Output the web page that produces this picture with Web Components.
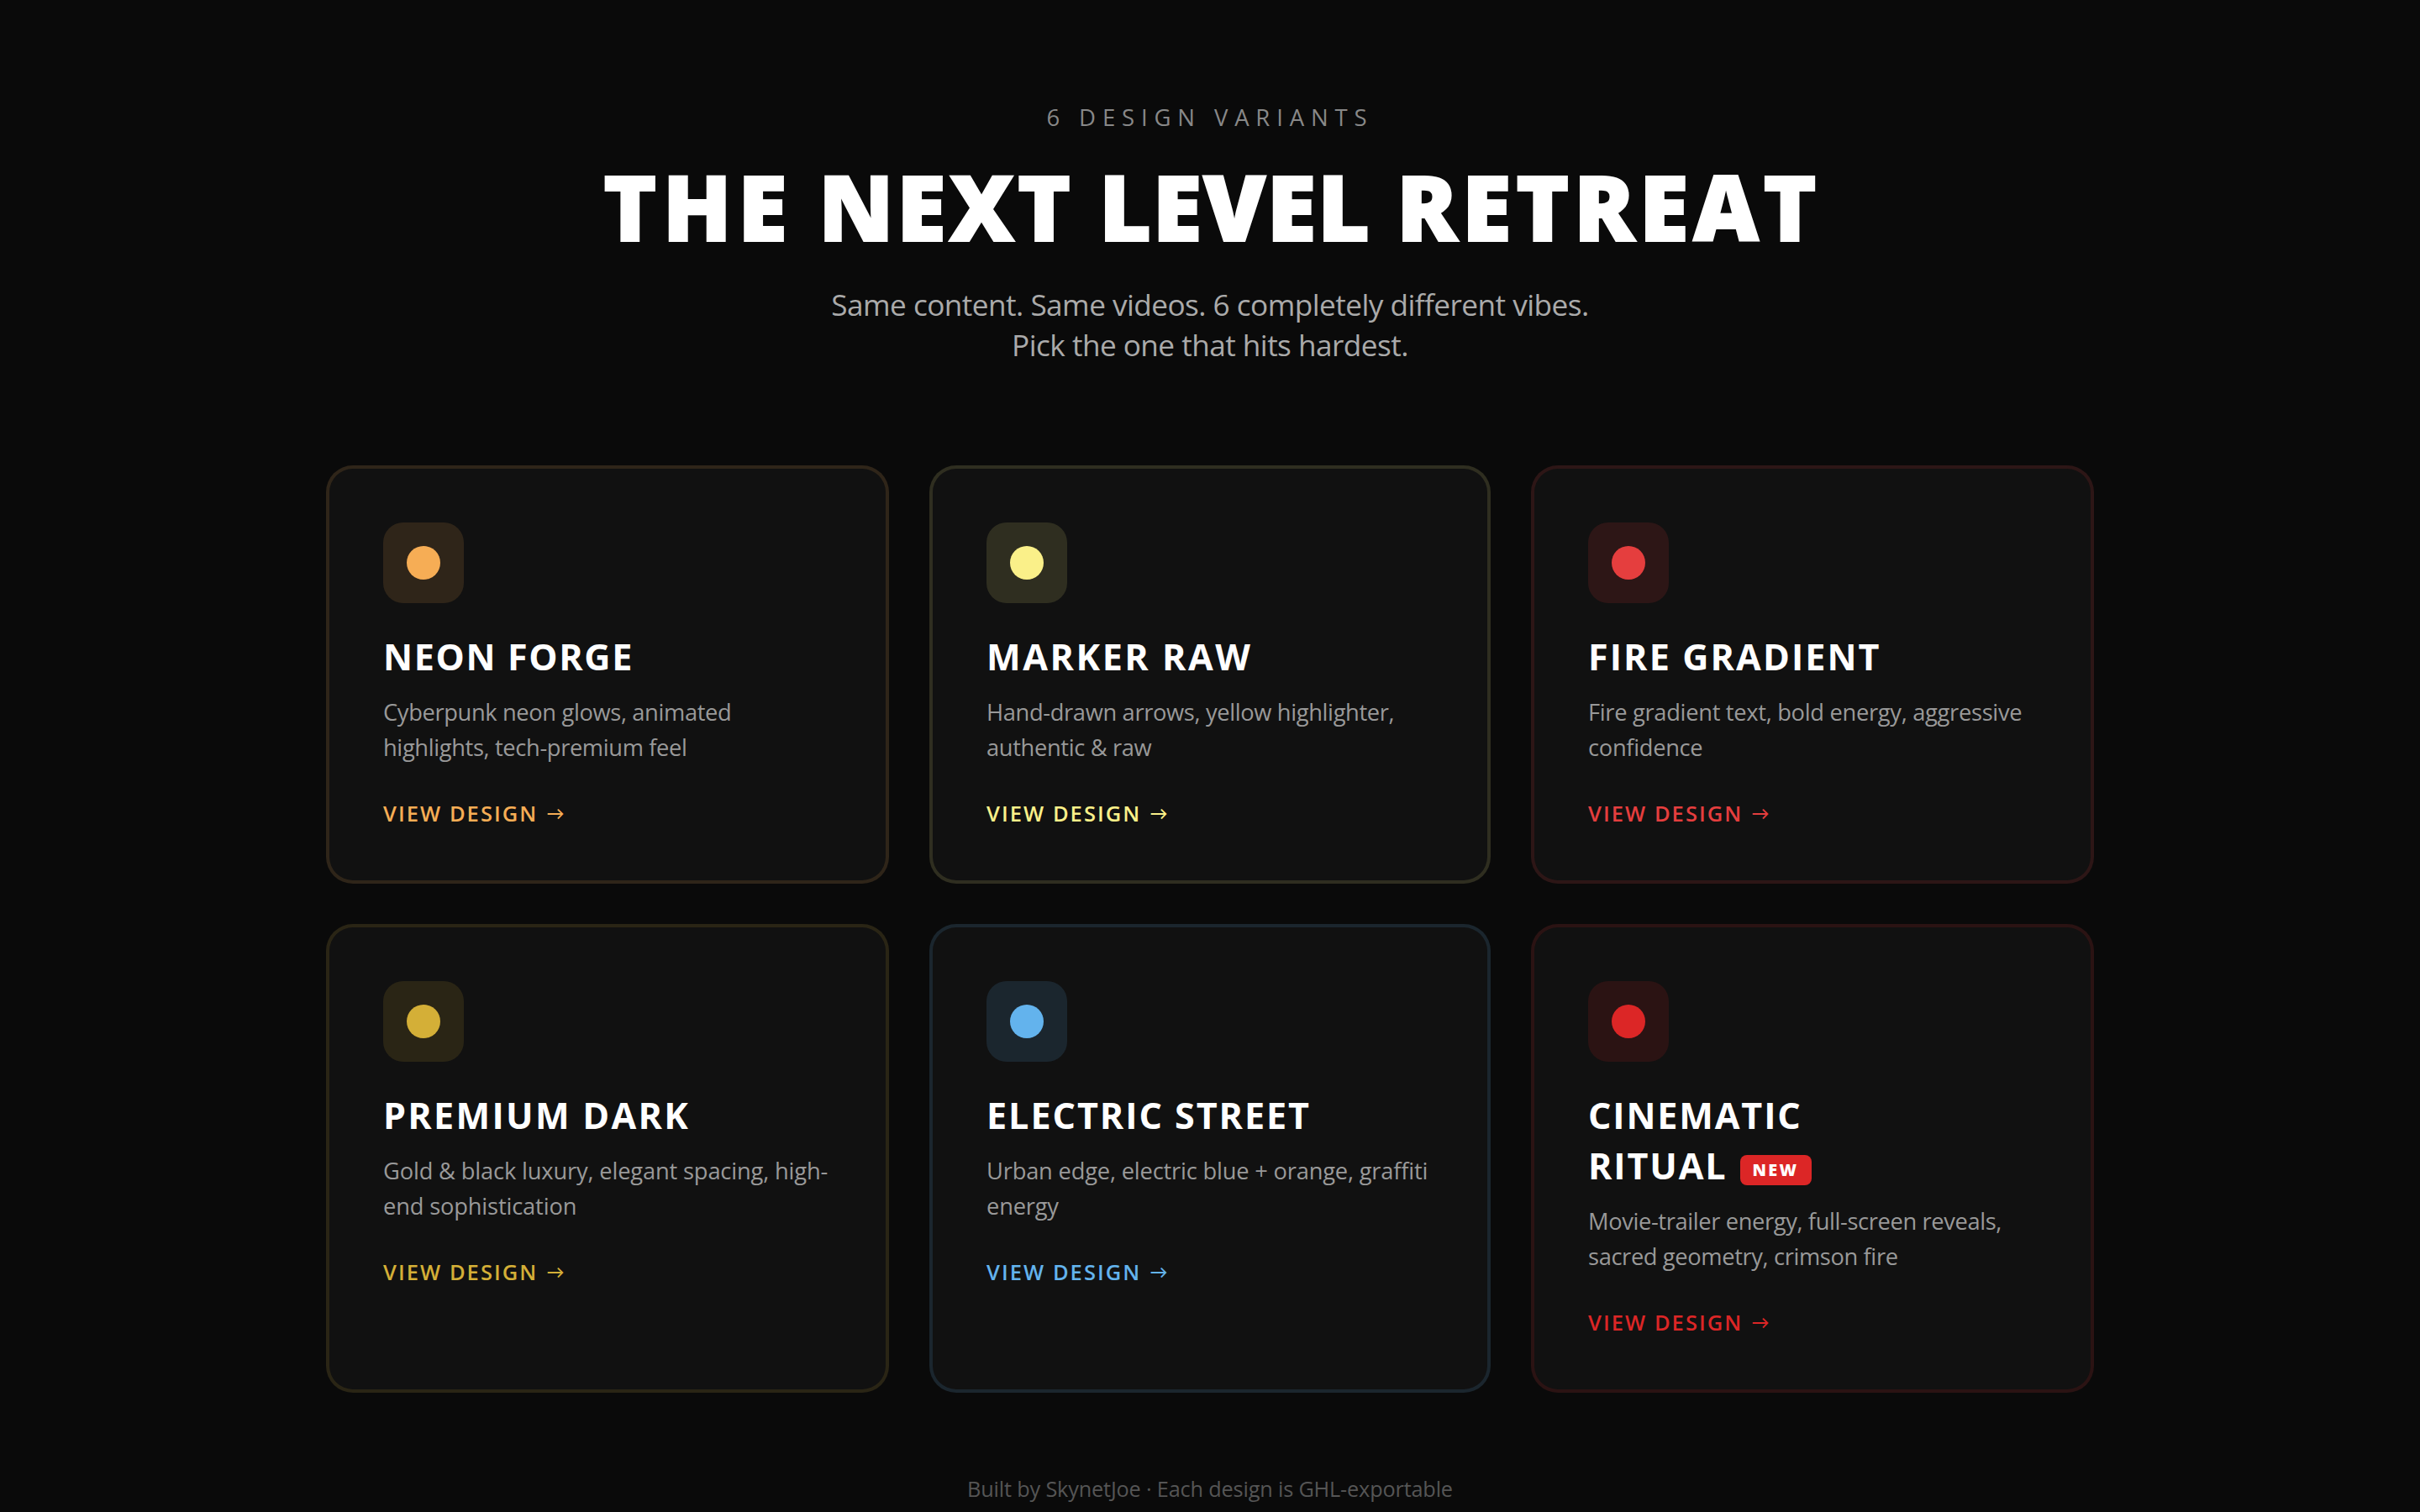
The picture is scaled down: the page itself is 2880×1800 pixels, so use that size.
<!DOCTYPE html>
<html lang="en">
<head>
<meta charset="UTF-8">
<title>The Next Level Retreat</title>
<style>
  body {
    margin: 0;
    min-height: 100vh;
    overflow: hidden;
    background: #0a0a0a;
    color: #fff;
    font-family: 'Open Sans', 'Noto Sans', sans-serif;
  }

  .t-the { letter-spacing: 7px; }
  .t-next { letter-spacing: 3.4px; }
  .t-level { letter-spacing: 1.2px; }
  .t-retreat { letter-spacing: 5.2px; }
</style>
</head>
<body>

<variant-page>
  <page-hero slot="hero">
    <span slot="eyebrow">6 DESIGN VARIANTS</span>
    <span slot="title"><span class="t-the">THE</span> <span class="t-next">NEXT</span> <span class="t-level">LEVEL</span> <span class="t-retreat">RETREAT</span></span>
    Same content. Same videos. 6 completely different vibes.<br>Pick the one that hits hardest.
  </page-hero>

  <variant-card accent="#f6ad55" style="--title-track: 1.65px; --text-track: -.37px">
    <span slot="title">NEON FORGE</span>
    Cyberpunk neon glows, animated highlights, tech-premium feel
  </variant-card>

  <variant-card accent="#faf089" style="--title-track: 2.55px; --text-track: -.36px">
    <span slot="title">MARKER RAW</span>
    Hand-drawn arrows, yellow highlighter, authentic &amp; raw
  </variant-card>

  <variant-card accent="#e53e3e" style="--title-track: 2.1px; --text-track: -.31px">
    <span slot="title">FIRE GRADIENT</span>
    Fire gradient text, bold energy, aggressive confidence
  </variant-card>

  <variant-card accent="#d4af37" style="--title-track: 2.3px; --text-track: -.17px">
    <span slot="title">PREMIUM DARK</span>
    Gold &amp; black luxury, elegant spacing, high-end sophistication
  </variant-card>

  <variant-card accent="#63b3ed" style="--title-track: 1.95px; --text-track: -.2px">
    <span slot="title">ELECTRIC STREET</span>
    Urban edge, electric blue + orange, graffiti energy
  </variant-card>

  <variant-card accent="#dc2626" style="--title-track: 1.85px; --text-track: -.38px">
    <span slot="title">CINEMATIC<br>RITUAL<new-badge>NEW</new-badge></span>
    Movie-trailer energy, full-screen reveals, sacred geometry, crimson fire
  </variant-card>

  <span slot="footer">Built by SkynetJoe · Each design is GHL-exportable</span>
</variant-page>

<template id="page-template">
  <style>
  :host {
    display: flex;
    flex-direction: column;
    width: 2104px;
    margin: 0 auto;
    padding-top: 121px;
  }

  main {
    display: grid;
    grid-template-columns: 670px 668px 670px;
    gap: 48px;
    margin-top: 120px;
  }

  footer {
    margin-top: 96px;
    color: #555;
    font-size: 25.3px;
    line-height: 36px;
    letter-spacing: -.18px;
    text-align: center;
  }
  </style>

  <slot name="hero"></slot>
  <main><slot></slot></main>
  <footer><slot name="footer"></slot></footer>
</template>

<template id="hero-template">
  <style>
  :host {
    display: block;
    text-align: center;
  }

  .eyebrow {
    color: #888;
    font-size: 27.5px;
    line-height: 38px;
    letter-spacing: 7.85px;
  }

  h1 {
    margin: 25px 0 30px;
    padding-left: 5px;
    font-size: 107.6px;
    font-weight: 800;
    line-height: 124px;
    letter-spacing: 4px;
    word-spacing: -2px;
    -webkit-text-stroke: 2px #fff;
  }

  p {
    margin: 0;
    color: #aaa;
    font-size: 35.2px;
    line-height: 48px;
    letter-spacing: -.55px;
  }
  </style>

  <div class="eyebrow"><slot name="eyebrow"></slot></div>
  <h1><slot name="title"></slot></h1>
  <p><slot></slot></p>
</template>

<template id="card-template">
  <style>
  :host {
    display: block;
    box-sizing: border-box;
    padding: 64px;
    background: #111;
    border: 4px solid var(--accent-soft);
    border-radius: 32px;
  }

  .icon {
    display: grid;
    place-items: center;
    width: 96px;
    height: 96px;
    border-radius: 24px;
    background: var(--accent-soft);
  }

  .dot {
    width: 40px;
    height: 40px;
    border-radius: 50%;
    background: var(--accent);
  }

  h2 {
    margin: 34px 0 15px;
    font-size: 43.1px;
    font-weight: 700;
    line-height: 60px;
    letter-spacing: var(--title-track);
  }

  p {
    margin: 0 0 41px;
    color: #999;
    font-size: 27.3px;
    line-height: 42px;
    letter-spacing: var(--text-track);
  }

  .link {
    display: flex;
    gap: 10px;
    height: 32px;
    color: var(--accent);
    font-size: 25.5px;
    font-weight: 600;
    line-height: 32px;
    letter-spacing: 2.05px;
  }

  .arrow {
    font-family: Lato, sans-serif;
    font-size: 21px;
  }
  </style>

  <div class="icon"><div class="dot"></div></div>
  <h2><slot name="title"></slot></h2>
  <p><slot></slot></p>
  <div class="link"><span>VIEW DESIGN</span><span class="arrow">→</span></div>
</template>

<template id="badge-template">
  <style>
  :host {
    display: inline-block;
    box-sizing: border-box;
    height: 36px;
    margin-left: 16px;
    padding: 0 16px 0 14px;
    border-radius: 8px;
    background: #dc2626;
    color: #fff;
    font-size: 19.8px;
    font-weight: 800;
    line-height: 36px;
    letter-spacing: 2.3px;
    vertical-align: 4px;
  }
  </style>
  <slot></slot>
</template>

<script>
class BaseElement extends HTMLElement {

  constructor(id) {
    super();
    this.attachShadow({ mode: 'open' });
    this.shadowRoot.appendChild(document.getElementById(id).content.cloneNode(true));
  }

}

class VariantPage extends BaseElement {
  constructor() {
    super('page-template');
  }
}

class PageHero extends BaseElement {
  constructor() {
    super('hero-template');
  }
}

class VariantCard extends BaseElement {

  constructor() {
    super('card-template');
  }

  connectedCallback() {
    const accent = this.getAttribute('accent');
    this.style.setProperty('--accent', accent);
    // border and icon tile share one translucent tint
    this.style.setProperty('--accent-soft', accent + '22');
  }

}

class NewBadge extends BaseElement {
  constructor() {
    super('badge-template');
  }
}

customElements.define('variant-page', VariantPage);
customElements.define('page-hero', PageHero);
customElements.define('variant-card', VariantCard);
customElements.define('new-badge', NewBadge);
</script>
</body>
</html>
